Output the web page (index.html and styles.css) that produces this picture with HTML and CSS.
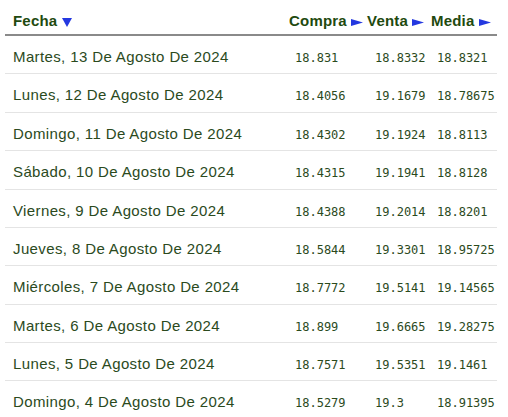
FILE: index.html
```html
<!DOCTYPE html>
<html lang="es">
<head>
<meta charset="utf-8">
<title>Tipo de cambio</title>
<link rel="stylesheet" href="styles.css">
</head>
<body>
<div class="table">
  <div class="row head">
    <div class="th c1">Fecha <svg class="down" width="10" height="9" viewBox="0 0 10 9"><polygon points="0,0 10,0 5,9" fill="#2438e0"/></svg></div>
    <div class="th c2">Compra <svg class="right" width="12" height="7" viewBox="0 0 12 7"><polygon points="0,0 12,3.5 0,7" fill="#2438e0"/></svg></div>
    <div class="th c3">Venta <svg class="right" width="12" height="7" viewBox="0 0 12 7"><polygon points="0,0 12,3.5 0,7" fill="#2438e0"/></svg></div>
    <div class="th c4">Media <svg class="right" width="12" height="7" viewBox="0 0 12 7"><polygon points="0,0 12,3.5 0,7" fill="#2438e0"/></svg></div>
  </div>
  <div class="row"><div class="date">Martes, 13 De Agosto De 2024</div><div class="num n2">18.831</div><div class="num n3">18.8332</div><div class="num n4">18.8321</div></div>
  <div class="row"><div class="date">Lunes, 12 De Agosto De 2024</div><div class="num n2">18.4056</div><div class="num n3">19.1679</div><div class="num n4">18.78675</div></div>
  <div class="row"><div class="date">Domingo, 11 De Agosto De 2024</div><div class="num n2">18.4302</div><div class="num n3">19.1924</div><div class="num n4">18.8113</div></div>
  <div class="row"><div class="date">Sábado, 10 De Agosto De 2024</div><div class="num n2">18.4315</div><div class="num n3">19.1941</div><div class="num n4">18.8128</div></div>
  <div class="row"><div class="date">Viernes, 9 De Agosto De 2024</div><div class="num n2">18.4388</div><div class="num n3">19.2014</div><div class="num n4">18.8201</div></div>
  <div class="row"><div class="date">Jueves, 8 De Agosto De 2024</div><div class="num n2">18.5844</div><div class="num n3">19.3301</div><div class="num n4">18.95725</div></div>
  <div class="row"><div class="date">Miércoles, 7 De Agosto De 2024</div><div class="num n2">18.7772</div><div class="num n3">19.5141</div><div class="num n4">19.14565</div></div>
  <div class="row"><div class="date">Martes, 6 De Agosto De 2024</div><div class="num n2">18.899</div><div class="num n3">19.6665</div><div class="num n4">19.28275</div></div>
  <div class="row"><div class="date">Lunes, 5 De Agosto De 2024</div><div class="num n2">18.7571</div><div class="num n3">19.5351</div><div class="num n4">19.1461</div></div>
  <div class="row"><div class="date">Domingo, 4 De Agosto De 2024</div><div class="num n2">18.5279</div><div class="num n3">19.3</div><div class="num n4">18.91395</div></div>
</div>
</body>
</html>
```
FILE: styles.css
```css
html, body {
  margin: 0;
  padding: 0;
  background: #ffffff;
}
body {
  font-family: "Liberation Sans", Arial, sans-serif;
  color: #2b4a1d;
}
.table {
  margin-left: 5px;
  width: 492px;
}
.row {
  display: grid;
  grid-template-columns: 278px 78px 64px 72px;
  align-items: baseline;
  height: 38.375px;
  box-sizing: border-box;
  border-bottom: 1px solid #e4e4e4;
  padding-top: 12px;
}
.row.head {
  height: 36px;
  padding-top: 12px;
  border-bottom: 2px solid #8a8a8a;
}
.th {
  font-weight: bold;
  font-size: 15px;
  line-height: 17px;
  color: #1f4a0f;
  white-space: nowrap;
  letter-spacing: 0.2px;
}
.c1 { padding-left: 8px; }
.c2 { padding-left: 6px; }
.c3 { padding-left: 6px; }
.c4 { padding-left: 6px; }
.down { vertical-align: -1px; margin-left: 0; }
.right { vertical-align: 0; margin-left: 0; }
.date {
  font-size: 15px;
  line-height: 17px;
  padding-left: 8px;
  white-space: nowrap;
  letter-spacing: 0.38px;
}
.num {
  font-family: "DejaVu Sans Mono", "Liberation Mono", monospace;
  font-size: 12px;
  line-height: 17px;
  white-space: nowrap;
}
.n2 { padding-left: 12px; }
.n3 { padding-left: 14px; }
.n4 { padding-left: 12px; }
```
